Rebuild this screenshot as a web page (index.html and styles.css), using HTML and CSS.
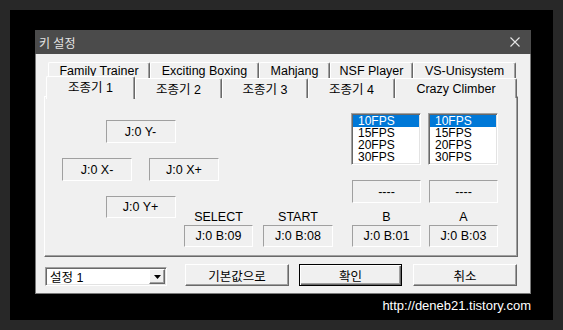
FILE: index.html
```html
<!DOCTYPE html>
<html lang="ko">
<head>
  <meta charset="UTF-8">
  <title>키 설정</title>
  <link rel="stylesheet" href="styles.css">
</head>
<body>
  <div class="frame">
    <div class="screen">
      <div class="dialog">
        <div class="titlebar">
          <span class="title">키 설정</span>
          <svg class="close" width="10" height="10" viewBox="0 0 10 10">
            <path d="M0.5 0.5 L9.5 9.5 M9.5 0.5 L0.5 9.5" stroke="#e6e6e6" stroke-width="1.1" fill="none"/>
          </svg>
        </div>

        <div class="body">
          <div class="tabs">
            <div class="tab-row back">
              <div class="tab">Family Trainer</div>
              <div class="tab">Exciting Boxing</div>
              <div class="tab">Mahjang</div>
              <div class="tab">NSF Player</div>
              <div class="tab">VS-Unisystem</div>
            </div>
            <div class="tab-row front">
              <div class="tab active">조종기 1</div>
              <div class="tab">조종기 2</div>
              <div class="tab">조종기 3</div>
              <div class="tab">조종기 4</div>
              <div class="tab">Crazy Climber</div>
            </div>
          </div>

          <div class="panel">
            <div class="left">
              <div class="dpad">
                <div class="field up">J:0 Y-</div>
                <div class="field">J:0 X-</div>
                <div class="field">J:0 X+</div>
                <div class="field down">J:0 Y+</div>
              </div>
              <div class="keys">
                <div class="key">
                  <div class="key-label">SELECT</div>
                  <div class="field">J:0 B:09</div>
                </div>
                <div class="key">
                  <div class="key-label">START</div>
                  <div class="field">J:0 B:08</div>
                </div>
              </div>
            </div>

            <div class="right">
              <div class="key-col">
                <div class="listbox">
                  <div class="sel">10FPS</div>
                  <div>15FPS</div>
                  <div>20FPS</div>
                  <div>30FPS</div>
                </div>
                <div class="field dash">----</div>
                <div class="key-label">B</div>
                <div class="field">J:0 B:01</div>
              </div>
              <div class="key-col">
                <div class="listbox">
                  <div class="sel">10FPS</div>
                  <div>15FPS</div>
                  <div>20FPS</div>
                  <div>30FPS</div>
                </div>
                <div class="field dash">----</div>
                <div class="key-label">A</div>
                <div class="field">J:0 B:03</div>
              </div>
            </div>
          </div>

          <div class="controls">
            <div class="combo">
              <span class="combo-text">설정 1</span>
              <span class="combo-btn">
                <svg width="7" height="4" viewBox="0 0 7 4"><path d="M0 0 H7 L3.5 4 Z" fill="#000"/></svg>
              </span>
            </div>
            <button class="btn">기본값으로</button>
            <button class="btn default">확인</button>
            <button class="btn">취소</button>
          </div>
        </div>
      </div>
      <div class="watermark">http://deneb21.tistory.com</div>
    </div>
  </div>
</body>
</html>
```

FILE: styles.css
```css
body {
  margin: 0;
  background: #282828;
  font-family: "Liberation Sans", "Noto Sans CJK KR", sans-serif;
  font-size: 12.5px;
  color: #000;
}

.frame {
  width: 563px;
  height: 330px;
  padding: 10px;
  box-sizing: border-box;
}

.screen {
  height: 310px;
  background: #000;
  padding: 20px 22px 0 25px;
  box-sizing: border-box;
}

.dialog {
  width: 496px;
  height: 264px;
  display: flex;
  flex-direction: column;
}

.titlebar {
  height: 24px;
  flex: none;
  background: #4b4b4b;
  color: #e3e3e3;
  font-size: 12px;
  display: flex;
  align-items: center;
  justify-content: space-between;
  padding: 0 11px 0 4px;
}

.body {
  flex: 1;
  background: #f0f0f0;
  border: 1px solid #7a7a7a;
  border-top: none;
  padding: 8px 12px 0 8px;
}

/* tabs */
.tab-row { display: grid; }
.back {
  grid-template-columns: 102px 109px 71px 83px 103px;
  height: 16px;
  margin-left: 4px;
}
.front {
  grid-template-columns: 89px 87px 86px 87px 122px;
  height: 18px;
  margin-left: 2px;
}

.tab {
  box-sizing: border-box;
  border-top: 1px solid #fff;
  border-left: 1px solid #fff;
  border-right: 1px solid #696969;
  border-radius: 2px 2px 0 0;
  box-shadow: inset -1px 0 #a0a0a0;
  background: #f0f0f0;
  display: flex;
  align-items: center;
  justify-content: center;
  white-space: nowrap;
}

.tab.active {
  margin: -2px 0 -1px;
  padding-bottom: 3px;
  position: relative;
  z-index: 1;
}

/* panel */
.panel {
  height: 161px;
  box-sizing: border-box;
  border: 1px solid;
  border-color: #fff #696969 #696969 #fff;
  box-shadow: inset -1px -1px #a0a0a0;
  padding: 16px 0 0 17px;
  display: flex;
}

.left { width: 271px; }

.dpad {
  display: grid;
  grid-template-columns: 70px 70px;
  grid-template-rows: 23px 23px 22px;
  column-gap: 17px;
  row-gap: 15px;
  padding-top: 7px;
}
.dpad .up,
.dpad .down {
  grid-column: 1 / 3;
  justify-self: center;
  width: 70px;
}

.field {
  box-sizing: border-box;
  height: 22px;
  border: 1px solid;
  border-color: #a0a0a0 #fff #fff #a0a0a0;
  display: flex;
  align-items: center;
  justify-content: center;
  white-space: nowrap;
}
.dpad .field { height: auto; }

.keys {
  display: flex;
  gap: 10px;
  margin: -9px 0 0 122px;
}
.key { width: 70px; }
.key:first-child { width: 69px; }

.key-label {
  height: 16px;
  line-height: 16px;
  text-align: center;
}

.right {
  display: flex;
  gap: 8px;
  margin-left: 19px;
}

.key-col {
  width: 69px;
  display: flex;
  flex-direction: column;
}
.key-col .key-label { margin-top: 6px; }

.listbox {
  height: 52px;
  box-sizing: border-box;
  margin-left: -1px;
  background: #fff;
  border: 1px solid;
  border-color: #a0a0a0 #fff #fff #a0a0a0;
  box-shadow: inset 1px 1px #696969, inset -1px -1px #e3e3e3;
  padding: 1px 1px 0 1px;
  font-size: 12px;
}
.listbox div {
  height: 12px;
  line-height: 12px;
  padding-left: 5px;
  overflow: hidden;
}
.listbox .sel {
  background: #0078d7;
  color: #fff;
}

.dash {
  height: 23px;
  margin-top: 15px;
}

/* bottom controls */
.controls {
  display: flex;
  align-items: flex-end;
  margin-top: 7px;
}

.combo {
  width: 122px;
  height: 19px;
  box-sizing: border-box;
  margin: 0 18px 0 1px;
  background: #fff;
  border: 1px solid;
  border-color: #a0a0a0 #fff #fff #a0a0a0;
  box-shadow: inset 1px 1px #696969, inset -1px -1px #e3e3e3;
  padding: 1px;
  display: flex;
  align-items: center;
}
.combo-text {
  flex: 1;
  padding-left: 3px;
}
.combo-btn {
  width: 16px;
  height: 15px;
  box-sizing: border-box;
  background: #f0f0f0;
  border: 1px solid;
  border-color: #fff #696969 #696969 #fff;
  box-shadow: inset -1px -1px #a0a0a0;
  display: flex;
  align-items: center;
  justify-content: center;
}

.btn {
  width: 104px;
  height: 22px;
  box-sizing: border-box;
  padding: 0;
  font: inherit;
  color: #000;
  background: #f0f0f0;
  border: 1px solid;
  border-color: #fff #696969 #696969 #fff;
  box-shadow: inset -1px -1px #a0a0a0;
}
.btn.default {
  width: 103px;
  margin: 0 11px 0 10px;
  border: 1px solid #000;
  box-shadow: inset 1px 1px #fff, inset -1px -1px #696969, inset -2px -2px #a0a0a0;
}

.watermark {
  color: #fff;
  font-size: 13px;
  line-height: 16px;
  text-align: right;
  margin-top: 4px;
}
```
